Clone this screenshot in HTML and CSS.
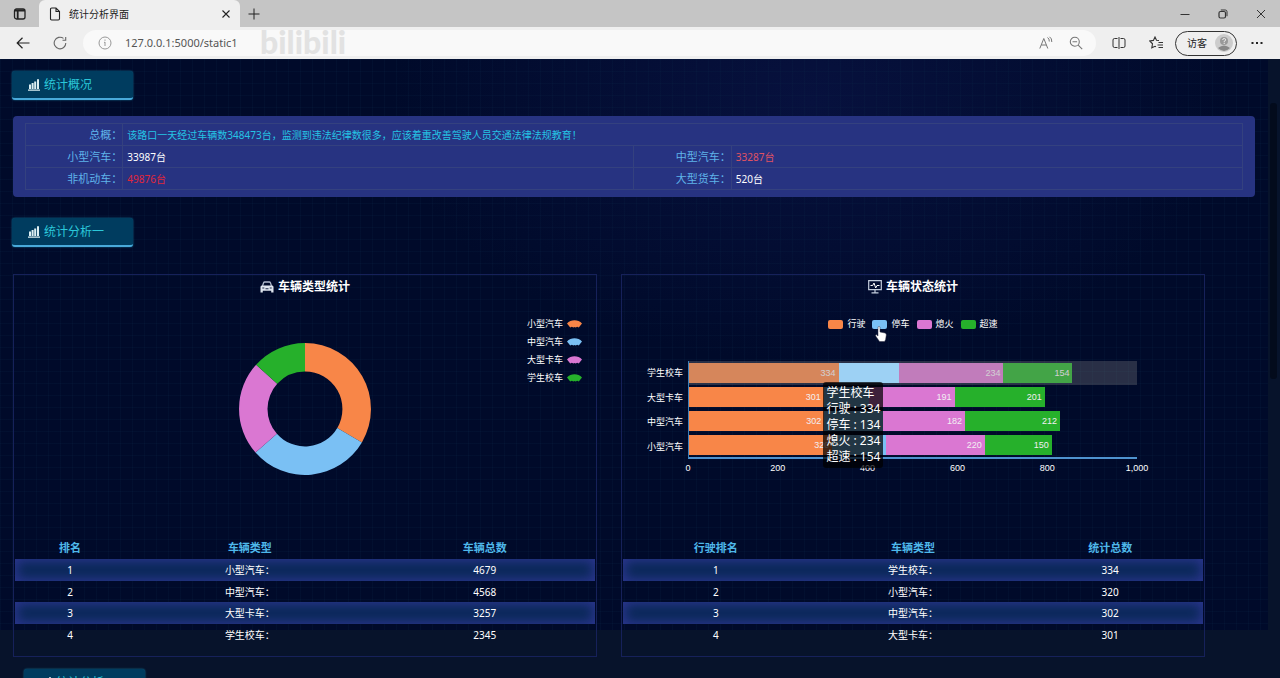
FILE: index.html
```html
<!DOCTYPE html>
<html lang="zh-CN">
<head>
<meta charset="utf-8">
<title>统计分析界面</title>
<link rel="stylesheet" href="styles.css">
</head>
<body>
<svg class="defs" aria-hidden="true">
  <symbol id="chart" viewBox="0 0 12 12"><path d="M0 10.500h12v1.200H0zM1 5.500h2V10H1zM3.600 4h2v6h-2zM6.200 2.400h2V10h-2zM9 .3h2V10H9z" fill="currentColor"/></symbol>
  <symbol id="fan" viewBox="0 0 14 7"><path d="M0 3C3.500-.9 10.500-.9 14 3L11 6.800 9.500 6 8 6.800 7 6.300 6 6.800 4.500 6 3 6.800Z" fill="currentColor"/></symbol>
</svg>

<header class="browser">
  <div class="tabstrip">
    <button class="icon-btn tab-menu" aria-label="标签页操作"><svg width="14" height="14" viewBox="0 0 14 14"><rect x="1.500" y="2" width="10.500" height="10" rx="2" fill="none" stroke="#222" stroke-width="1.300"/><path d="M1.500 3.500h10.500M4.700 4v8" stroke="#222" stroke-width="1.800"/></svg></button>
    <div class="tab">
      <svg width="12" height="14" viewBox="0 0 12 14"><path d="M1.500 2.200q0-1.200 1.200-1.200h4.300L10.500 4.500v7.300q0 1.200-1.200 1.200H2.700q-1.200 0-1.200-1.200zM7 1v3.500h3.500" fill="none" stroke="#222" stroke-width="1.100"/></svg>
      <span class="tab-title">统计分析界面</span>
      <button class="icon-btn" aria-label="关闭标签页"><svg width="10" height="10" viewBox="0 0 10 10"><path d="M1.500 1.500l7 7m0-7l-7 7" stroke="#222" stroke-width="1.100"/></svg></button>
    </div>
    <button class="icon-btn new-tab" aria-label="新建标签页"><svg width="12" height="12" viewBox="0 0 12 12"><path d="M6 .5v11M.5 6h11" stroke="#222"/></svg></button>
    <div class="window-buttons">
      <button class="icon-btn" aria-label="最小化"><svg width="10" height="10" viewBox="0 0 10 10"><path d="M.5 5.500h9" stroke="#333"/></svg></button>
      <button class="icon-btn" aria-label="还原"><svg width="10" height="10" viewBox="0 0 10 10"><rect x="1" y="2.500" width="6.500" height="6.500" rx="1.500" fill="none" stroke="#333" stroke-width="1.200"/><path d="M2.800 1h4.500Q9 1 9 2.700v4.500" fill="none" stroke="#333"/></svg></button>
      <button class="icon-btn" aria-label="关闭"><svg width="10" height="10" viewBox="0 0 10 10"><path d="M1 1l8 8m0-8l-8 8" stroke="#333"/></svg></button>
    </div>
  </div>
  <div class="toolbar">
    <div class="nav">
      <button class="icon-btn" aria-label="返回"><svg width="14" height="12" viewBox="0 0 14 12"><path d="M13.500 6H1M6.500.8L1.200 6l5.300 5.200" fill="none" stroke="#222" stroke-width="1.200"/></svg></button>
      <button class="icon-btn" aria-label="刷新"><svg width="14" height="14" viewBox="0 0 14 14"><path d="M12.800 7A5.800 5.800 0 1 1 10.500 2.400M12.700 1v3.200H9.500" fill="none" stroke="#666" stroke-width="1.100"/></svg></button>
    </div>
    <div class="address">
      <svg width="14" height="14" viewBox="0 0 14 14"><circle cx="7" cy="7" r="6" fill="none" stroke="#999"/><path d="M7 6v4M7 3.500v1.300M6 6.300h1" stroke="#999"/></svg>
      <input class="url" type="text" value="127.0.0.1:5000/static1" aria-label="地址">
      <button class="icon-btn" aria-label="朗读"><svg width="14" height="14" viewBox="0 0 14 14"><path d="M.8 12.500L4.800 2.500l4 10M2.300 9h5M8.500 1.500q2 1.200 1.800 4M10.500.8q2.500 1.500 2.300 5.200" fill="none" stroke="#777"/></svg></button>
      <button class="icon-btn" aria-label="缩小"><svg width="14" height="14" viewBox="0 0 14 14"><circle cx="5.800" cy="5.800" r="4.500" fill="none" stroke="#777" stroke-width="1.100"/><path d="M3.500 5.800h4.600M9.200 9.200l4 4" stroke="#777" stroke-width="1.100"/></svg></button>
    </div>
    <div class="tools">
      <button class="icon-btn" aria-label="分屏"><svg width="14" height="14" viewBox="0 0 14 14"><path d="M5.500 2.500h-3Q1 2.500 1 4v6q0 1.500 1.500 1.500h3M8.500 2.500h3Q13 2.500 13 4v6q0 1.500-1.500 1.500h-3M7 1v12" fill="none" stroke="#333"/></svg></button>
      <button class="icon-btn" aria-label="收藏夹"><svg width="14" height="14" viewBox="0 0 14 14"><path d="M10 4.500L7.500 4.200 6 1 4.400 4.400.8 5l2.700 2.800-.7 4L6 10.300l1 .5M9.500 6.500H14M8.500 9H14M9.500 11.500H14" fill="none" stroke="#333" stroke-width="1.100"/></svg></button>
      <button class="profile">访客<svg width="18" height="18" viewBox="0 0 18 18"><circle cx="9" cy="9" r="9" fill="#ccc"/><circle cx="9" cy="7" r="4" fill="#999"/><path d="M3 14q6-5 12 0-6 6-12 0" fill="#888"/><path d="M7.700 6q0-1.500 1.500-1.500t1.400 1.400Q10.500 7 9.200 7.300V8.300M9.200 9v1" fill="none" stroke="#eee"/></svg></button>
      <button class="icon-btn" aria-label="更多"><svg width="12" height="4" viewBox="0 0 12 4"><path d="M.5 1h2v2h-2zM5 1h2v2H5zM9.500 1h2v2h-2z" fill="#222"/></svg></button>
    </div>
  </div>
  <span class="watermark">bilibili</span>
</header>

<main class="page">
  <div class="content">
    <h2 class="section-tag"><svg class="tag-icon"><use href="#chart"/></svg>统计概况</h2>

    <section class="summary">
      <table class="summary-table">
        <colgroup><col class="col-label"><col class="col-value"><col class="col-label"><col class="col-value"></colgroup>
        <tr><th>总概：</th><td class="cyan" colspan="3">该路口一天经过车辆数348473台，监测到违法纪律数很多，应该着重改善驾驶人员交通法律法规教育！</td></tr>
        <tr><th>小型汽车：</th><td>33987台</td><th>中型汽车：</th><td class="coral">33287台</td></tr>
        <tr><th>非机动车：</th><td class="red">49876台</td><th>大型货车：</th><td>520台</td></tr>
      </table>
    </section>

    <h2 class="section-tag"><svg class="tag-icon"><use href="#chart"/></svg>统计分析一</h2>

    <div class="panels">
      <section class="panel">
        <h3 class="panel-title"><svg width="14" height="12" viewBox="0 0 14 12"><path d="M2.500 5L3.600 1.800Q3.900 1 4.700 1h4.600q.8 0 1.100.8L11.500 5" fill="none" stroke="#aeb8cc" stroke-width="1.300"/><path d="M1.800 4.500h10.400Q13.500 4.500 13.500 6v5.500h-2.300V9.800H2.800v1.700H.5V6Q.5 4.500 1.800 4.500z" fill="#dde4ee"/><path d="M2.300 7h2M9.700 7h2M5.500 7.800h3" stroke="#1c2748" stroke-width="1.100"/></svg>车辆类型统计</h3>
        <div class="chart donut-chart">
          <svg class="donut" viewBox="0 0 132 132" role="img" aria-label="车辆类型占比">
            <path d="M66 0A66 66 0 0 1 122.900 99.400L98.300 84.900A37.500 37.500 0 0 0 66 28.500Z" fill="#f88648"/>
            <path d="M122.900 99.400A66 66 0 0 1 16.500 109.600L37.900 90.800A37.500 37.500 0 0 0 98.300 84.900Z" fill="#7ac0f4"/>
            <path d="M16.500 109.600A66 66 0 0 1 17.100 21.700L38.200 40.800A37.500 37.500 0 0 0 37.900 90.800Z" fill="#da77d2"/>
            <path d="M17.100 21.700A66 66 0 0 1 66 0V28.500A37.500 37.500 0 0 0 38.200 40.800Z" fill="#26b02b"/>
          </svg>
          <ul class="legend-side">
            <li>小型汽车<svg class="fan orange"><use href="#fan"/></svg></li>
            <li>中型汽车<svg class="fan blue"><use href="#fan"/></svg></li>
            <li>大型卡车<svg class="fan pink"><use href="#fan"/></svg></li>
            <li>学生校车<svg class="fan green"><use href="#fan"/></svg></li>
          </ul>
        </div>
        <table class="rank rank-types">
          <thead><tr><th>排名</th><th>车辆类型</th><th>车辆总数</th></tr></thead>
          <tbody>
            <tr><td>1</td><td>小型汽车：</td><td>4679</td></tr>
            <tr><td>2</td><td>中型汽车：</td><td>4568</td></tr>
            <tr><td>3</td><td>大型卡车：</td><td>3257</td></tr>
            <tr><td>4</td><td>学生校车：</td><td>2345</td></tr>
          </tbody>
        </table>
      </section>

      <section class="panel">
        <h3 class="panel-title"><svg width="14" height="14" viewBox="0 0 14 14"><path d="M.7.700h12.600v9H.7zM7 10v2.500M3.500 12.800h7" fill="none" stroke="#c4cede" stroke-width="1.200"/><path d="M2.500 5.500h2.200L6 3l1.700 5L9 5.500h2.500" fill="none" stroke="#fff"/></svg>车辆状态统计</h3>
        <div class="chart bar-chart">
          <ul class="legend-top">
            <li><i class="swatch orange"></i>行驶</li>
            <li><i class="swatch blue"></i>停车<svg class="cursor" width="12" height="16" viewBox="0 0 12 16"><path d="M3 1.500Q3 .5 4 .5t1 1V6l5 1q1.500.5 1.300 2l-.7 4.500-1 2H4.500L1 10.500Q0 9 1.200 8.600L3 10Z" fill="#fff" stroke="#334" stroke-width=".5"/></svg></li>
            <li><i class="swatch pink"></i>熄火</li>
            <li><i class="swatch green"></i>超速</li>
          </ul>
          <div class="plot">
            <div class="categories"><span>学生校车</span><span>大型卡车</span><span>中型汽车</span><span>小型汽车</span></div>
            <div class="bars">
              <div class="bar-row active"><b class="orange" style="width:33.4%">334</b><b class="blue" style="width:13.4%"></b><b class="pink" style="width:23.4%">234</b><b class="green" style="width:15.4%">154</b></div>
              <div class="bar-row"><b class="orange" style="width:30.1%">301</b><b class="blue" style="width:10.1%"></b><b class="pink" style="width:19.1%">191</b><b class="green" style="width:20.1%">201</b></div>
              <div class="bar-row"><b class="orange" style="width:30.2%">302</b><b class="blue" style="width:13.2%"></b><b class="pink" style="width:18.2%">182</b><b class="green" style="width:21.2%">212</b></div>
              <div class="bar-row"><b class="orange" style="width:32%">320</b><b class="blue" style="width:12%"></b><b class="pink" style="width:22%">220</b><b class="green" style="width:15%">150</b></div>
              <div class="tooltip">学生校车<br>行驶 : 334<br>停车 : 134<br>熄火 : 234<br>超速 : 154</div>
            </div>
            <div class="axis"><span>0</span><span>200</span><span>400</span><span>600</span><span>800</span><span>1,000</span></div>
          </div>
        </div>
        <table class="rank rank-states">
          <thead><tr><th>行驶排名</th><th>车辆类型</th><th>统计总数</th></tr></thead>
          <tbody>
            <tr><td>1</td><td>学生校车：</td><td>334</td></tr>
            <tr><td>2</td><td>小型汽车：</td><td>320</td></tr>
            <tr><td>3</td><td>中型汽车：</td><td>302</td></tr>
            <tr><td>4</td><td>大型卡车：</td><td>301</td></tr>
          </tbody>
        </table>
      </section>
    </div>

    <h2 class="section-tag next-tag"><svg class="tag-icon"><use href="#chart"/></svg>统计分析二</h2>
  </div>
  <div class="scrollbar"><div class="thumb"></div></div>
</main>
</body>
</html>
```

FILE: styles.css
```css
* { box-sizing: border-box; }
body {
  margin: 0;
  height: 100vh;
  overflow: hidden;
  display: flex;
  flex-direction: column;
  background: #07132e;
  color: #fff;
  font: 10px/16px "Noto Sans", "Noto Sans CJK SC", sans-serif;
}
button, input { font: inherit; color: inherit; border: 0; background: none; padding: 0; }
h2, h3, ul { margin: 0; padding: 0; font-weight: normal; }
li { list-style: none; }
svg { flex: none; }
.defs { position: absolute; width: 0; height: 0; }

/* browser frame */
.browser { position: relative; flex: none; color: #222; }
.tabstrip { display: flex; align-items: center; height: 27px; background: #c5c5c5; }
.icon-btn { display: flex; align-items: center; justify-content: center; flex: none; }
.tab-menu { width: 39px; }
.tab {
  display: flex;
  align-items: center;
  gap: 8px;
  width: 201px;
  height: 27px;
  padding: 0 9px 0 10px;
  border-radius: 6px 6px 0 0;
  background: #efefef;
}
.tab-title { flex: 1; }
.new-tab { width: 28px; }
.window-buttons { display: flex; gap: 28px; margin-left: auto; padding-right: 14px; }
.toolbar { display: flex; align-items: center; height: 32px; background: #efefef; }
.nav { display: flex; gap: 23px; width: 83px; padding-left: 16px; }
.address {
  display: flex;
  align-items: center;
  flex: 1;
  gap: 16px;
  height: 26px;
  padding: 0 13px 0 15px;
  border-radius: 13px;
  background: #f9f9f9;
}
.url { flex: 1; min-width: 0; margin-left: -3px; font-size: 11px; color: #555; }
.tools { display: flex; align-items: center; gap: 23px; padding: 0 17px 0 16px; }
.profile {
  display: flex;
  align-items: center;
  gap: 8px;
  height: 25px;
  margin: 0 -9px 0 -11px;
  padding: 0 3px 0 11px;
  border: 1px solid #333;
  border-radius: 13px;
}
.watermark {
  position: absolute;
  left: 260px;
  top: 22px;
  font: 900 32px/40px Lato, sans-serif;
  color: #e2e2e2;
}

/* dashboard */
.page { flex: 1; display: flex; min-height: 0; }
.content {
  flex: 1;
  min-width: 0;
  padding: 12px 13px 0 12px;
  background:
    linear-gradient(#07132b, #07132b) 0 571px no-repeat,
    repeating-linear-gradient(90deg, #0c2a4a2c 0 1px, #0000 1px 12px),
    repeating-linear-gradient(#0c2a4a2c 0 1px, #0000 1px 12px),
    radial-gradient(ellipse 420px 260px at 64% 7%, #07113e, #000a2a00),
    #000a2a;
}
.scrollbar { width: 12px; padding: 44px 3px 0 2px; background: #07132b; }
.thumb { height: 276px; border-radius: 3px; background: #030b1c; }
.section-tag {
  display: flex;
  align-items: center;
  gap: 4px;
  width: 121px;
  height: 29px;
  padding: 0 16px;
  border-bottom: 2px solid #49a9da;
  border-radius: 3px;
  background: #003c5f;
  box-shadow: 0 0 2px #157a9c;
  color: #2bc8da;
  font-size: 12px;
}
.tag-icon { width: 12px; height: 12px; color: #dceef2; }
.summary {
  margin: 16px 0 21px 1px;
  padding: 7px 12px;
  border-radius: 4px;
  background: #273381;
}
.summary-table { width: 100%; border-collapse: collapse; table-layout: fixed; }
.summary-table th, .summary-table td { height: 22px; padding: 0 4px; border: 1px solid #34417f; text-align: left; }
.summary-table th { padding-right: 0; text-align: right; font-weight: normal; font-size: 11px; color: #5fb4ea; }
.summary-table .cyan { color: #25c4e4; }
.summary-table .coral { color: #e05262; }
.summary-table .red { color: #e0263a; }
.col-label { width: 8%; }
.col-value { width: 42%; }

.panels { display: grid; grid-template-columns: 1fr 1fr; gap: 24px; margin: 27px 50px 12px 1px; }
.panel { padding: 1px 1px 11px; border: 1px solid #16215a; }
.panel-title {
  display: flex;
  align-items: center;
  justify-content: center;
  gap: 4px;
  height: 22px;
  font-size: 12px;
  font-weight: bold;
}
.chart { height: 239px; }
.orange { background: #f88648; color: #f88648; }
.blue { background: #7ac0f4; color: #7ac0f4; }
.pink { background: #da77d2; color: #da77d2; }
.green { background: #26b02b; color: #26b02b; }

.donut-chart { display: grid; grid-template-columns: 1fr 132px 1fr; }
.donut { grid-column: 2; width: 132px; height: 132px; margin-top: 45px; }
.legend-side { justify-self: end; padding: 17px 13px 0 0; font-size: 9px; line-height: 18px; }
.legend-side li { display: flex; align-items: center; gap: 4px; }
.fan { width: 15px; height: 8px; background: none; }

.bar-chart { font: 9px/18px "Liberation Sans", "Noto Sans CJK SC", sans-serif; }
.legend-top { display: flex; justify-content: center; gap: 7px; padding-top: 17px; }
.legend-top li { position: relative; display: flex; align-items: center; gap: 4px; }
.swatch { width: 15px; height: 9px; border-radius: 2px; }
.cursor { position: absolute; left: 3px; top: 11px; }
.plot { display: grid; grid-template-columns: 60px 1fr; column-gap: 5px; padding: 28px 66px 0 0; }
.categories, .bars { display: grid; grid-template-rows: repeat(4, 1fr); height: 98px; }
.categories { align-items: center; justify-items: end; }
.bars { position: relative; border-left: 1px solid #3a80bb; border-bottom: 2px solid #4f93cf; }
.bar-row { display: flex; align-items: center; }
.bar-row b { height: 20px; padding-right: 3px; color: #f2eef2; font-weight: normal; line-height: 20px; text-align: right; }
.active { position: relative; }
.active::after { content: ""; position: absolute; inset: 0; background: #8888884d; }
.active .blue { position: relative; z-index: 1; background: #9dd1f4; }
.tooltip {
  position: absolute;
  left: 30%;
  top: 21px;
  z-index: 2;
  padding: 3px;
  border-radius: 3px;
  background: #000000b8;
  font: 12px/16px "Noto Sans", "Noto Sans CJK SC", sans-serif;
  white-space: nowrap;
}
.axis { grid-column: 2; display: flex; justify-content: space-between; margin: 0 -20px; }
.axis span { width: 40px; text-align: center; }

.rank { width: 100%; border-collapse: collapse; table-layout: fixed; text-align: center; line-height: 14px; }
.rank th { padding: 0; color: #4fb8ea; font-size: 11px; }
.rank td { padding: 0; }
.rank tr { height: 22px; }
.rank tbody tr:nth-child(even) { height: 21px; }
.rank tbody tr:nth-child(odd) { background: #0a2858; box-shadow: inset 0 0 12px 2px #2c3690; }
.rank-types th:nth-child(1) { width: 19%; }
.rank-types th:nth-child(2) { width: 43%; }
.rank-states th:nth-child(1) { width: 32%; }
.rank-states th:nth-child(2) { width: 36%; }
.next-tag { margin-left: 12px; }
```
